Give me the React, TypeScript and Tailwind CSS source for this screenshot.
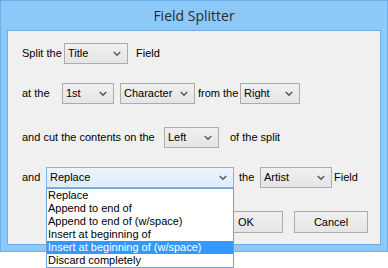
import type { ReactNode } from "react";

const font = { fontFamily: '"Liberation Sans", Arial, sans-serif' };

function Chevron() {
  return (
    <svg width="8" height="6" viewBox="0 0 8 6" className="shrink-0">
      <path d="M0.8 1 L4 4.2 L7.2 1" fill="none" stroke="#5a5a5a" strokeWidth="1.6" />
    </svg>
  );
}

function Combo({
  value,
  width,
  focused = false,
}: {
  value: string;
  width: string;
  focused?: boolean;
}) {
  return (
    <div
      className={`flex h-[21px] shrink-0 items-center justify-between border pl-[3px] pr-[6px] text-black ${width} ${
        focused
          ? "border-[#7eb4ea] bg-[linear-gradient(180deg,#ecf4fc,#dcecfc)]"
          : "border-[#acacac] bg-[linear-gradient(180deg,#f0f0f0,#e5e5e5)]"
      }`}
    >
      <span>{value}</span>
      <Chevron />
    </div>
  );
}

function Label({ children, className = "" }: { children: ReactNode; className?: string }) {
  return <span className={`shrink-0 whitespace-nowrap ${className}`}>{children}</span>;
}

function Button({ children, className = "" }: { children: ReactNode; className?: string }) {
  return (
    <div
      className={`flex h-[22px] w-[74px] items-center justify-center border border-[#acacac] bg-[linear-gradient(180deg,#f0f0f0,#e5e5e5)] text-black ${className}`}
    >
      {children}
    </div>
  );
}

const options = [
  "Replace",
  "Append to end of",
  "Append to end of (w/space)",
  "Insert at beginning of",
  "Insert at beginning of (w/space)",
  "Discard completely",
];

export default function App() {
  return (
    <div className="relative h-[268px] w-[388px] overflow-hidden bg-white text-[11px]" style={font}>
      <div className="flex h-[252px] w-[388px] flex-col border border-[#6eaee6] bg-[#8cc8f8]">
        <div
          className="flex h-[29px] shrink-0 items-center justify-center text-[14px] text-[#2b2b2b]"
          style={{ fontFamily: '"Open Sans", "Noto Sans", sans-serif' }}
        >
          Field Splitter
        </div>

        <div className="ml-[6px] h-[215px] w-[374px] border border-[#74ace0] bg-[#f0f0f0]">
          <div className="flex h-[21px] items-center pl-[14px] mt-[12px]">
            <Label className="w-[42px]">Split the</Label>
            <Combo value="Title" width="w-[64px]" />
            <Label className="ml-[8px]">Field</Label>
          </div>

          <div className="mt-[19px] flex h-[21px] items-center pl-[14px]">
            <Label className="w-[40px]">at the</Label>
            <Combo value="1st" width="w-[52px]" />
            <div className="w-[6px]" />
            <Combo value="Character" width="w-[75px]" />
            <Label className="ml-[3px] w-[42px]">from the</Label>
            <Combo value="Right" width="w-[60px]" />
          </div>

          <div className="mt-[23px] flex h-[21px] items-center pl-[14px]">
            <Label className="w-[142px]">and cut the contents on the</Label>
            <Combo value="Left" width="w-[55px]" />
            <Label className="ml-[11px]">of the split</Label>
          </div>

          <div className="mt-[19px] flex h-[21px] items-center pl-[14px]">
            <Label className="w-[24px]">and</Label>
            <Combo value="Replace" width="w-[188px]" focused />
            <Label className="ml-[5px] w-[21px]">the</Label>
            <Combo value="Artist" width="w-[72px]" />
            <Label className="ml-[2px]">Field</Label>
          </div>

          <div className="mt-[23px] flex h-[22px] items-center pl-[201px]">
            <Button>OK</Button>
            <Button className="ml-[11px]">Cancel</Button>
          </div>
        </div>
      </div>

      <div className="absolute left-[46px] top-[188px] w-[188px] border border-[#6fa3d8] bg-white">
        {options.map((opt) => (
          <div
            key={opt}
            className={`flex h-[13px] items-center whitespace-nowrap pl-[1px] leading-[13px] ${
              opt === "Insert at beginning of (w/space)" ? "bg-[#3399ff] text-white" : "text-black"
            }`}
          >
            {opt}
          </div>
        ))}
      </div>
    </div>
  );
}
